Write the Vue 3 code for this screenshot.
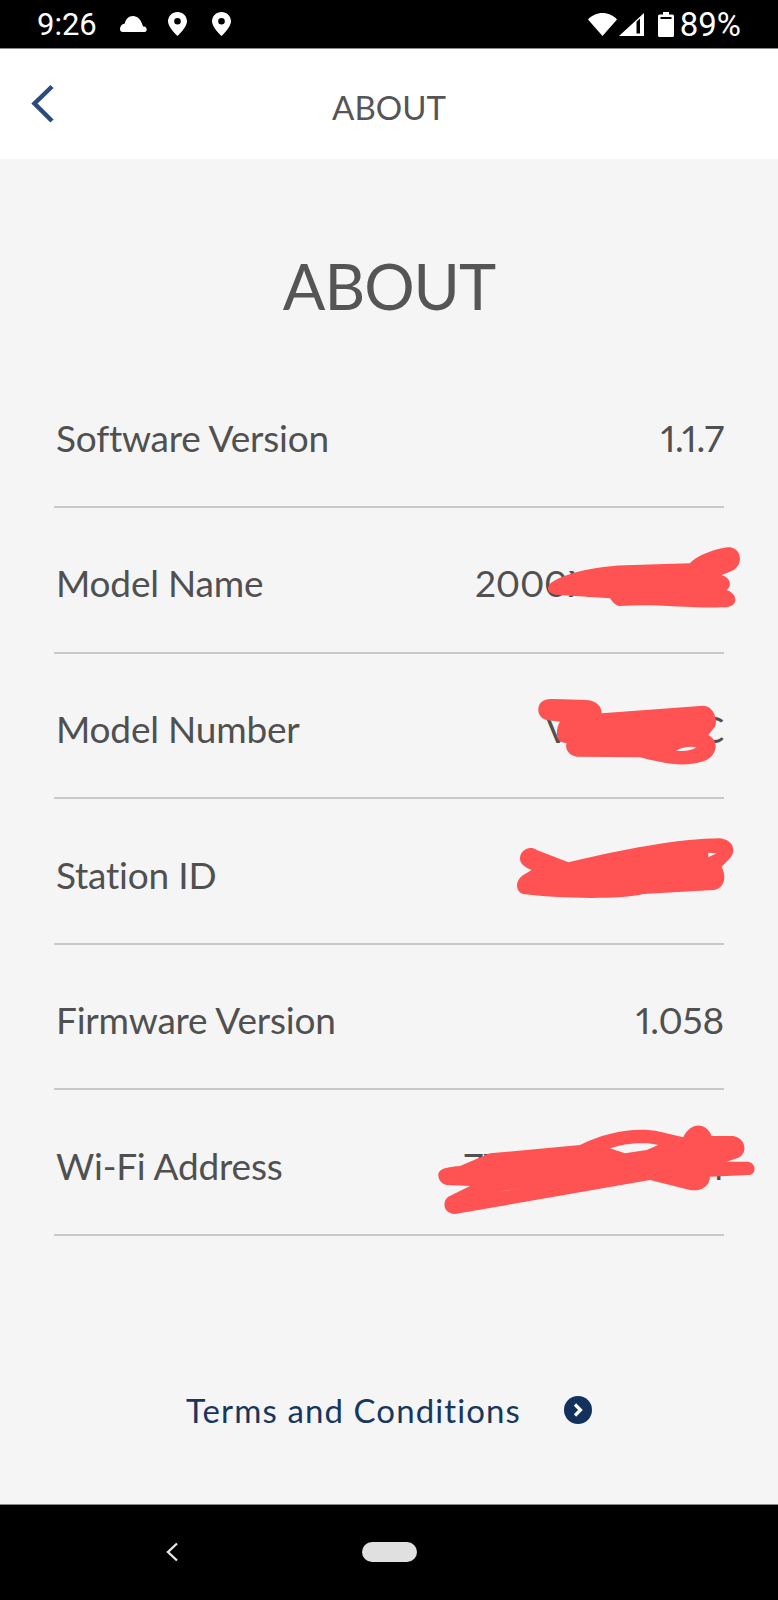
<template>
  <div class="screen">
    <!-- Android status bar -->
    <div class="status-bar">
      <div class="status-left">
        <span class="clock">9:26</span>
        <svg class="icon-cloud" viewBox="0 0 27 16"><path d="M3 16h21.500c3 0 3-5.500-.5-5.500-.5 0-1 .1-1 .1C21.500 4 17.500 0 13 0 8.500 0 5.500 3.500 4.800 7.500 1.500 8 0 10.500 0 13c0 2 1 3 3 3z" fill="#fff"/></svg>
        <svg v-for="n in 2" :key="n" class="icon-pin" viewBox="0 0 19 24"><path fill-rule="evenodd" d="M9.500 0C4.200 0 0 4.100 0 9.300 0 14 5.500 20.500 9.500 24c4-3.500 9.500-10 9.500-14.700C19 4.100 14.800 0 9.500 0zm0 12.500a3.300 3.300 0 1 1 0-6.600 3.300 3.300 0 0 1 0 6.600z" fill="#fff"/></svg>
      </div>
      <div class="status-right">
        <svg class="icon-wifi" viewBox="0 0 29 23"><path d="M14.500 23 0 6.500C3.500 2.500 9 0 14.500 0S25.500 2.500 29 6.500z" fill="#fff"/></svg>
        <svg class="icon-signal" viewBox="0 0 25 23"><path fill-rule="evenodd" d="M0 23 25 0v23zM17.500 20.500h3.500V5.500l-3.500 3.200z" fill="#fff"/></svg>
        <svg class="icon-battery" viewBox="0 0 16 25"><path fill-rule="evenodd" d="M5 0h6v2.500h3.500A1.500 1.500 0 0 1 16 4v19.500a1.500 1.500 0 0 1-1.500 1.500h-13A1.500 1.500 0 0 1 0 23.500V4a1.500 1.500 0 0 1 1.500-1.500H5zM2.500 5v2h11V5z" fill="#fff"/></svg>
        <span class="battery-pct">89%</span>
      </div>
    </div>

    <!-- Nav -->
    <header class="nav">
      <svg class="nav-back" viewBox="0 0 24 40"><path d="M21 2.500 3.500 19.500 21 37" fill="none" stroke="#2b4a7f" stroke-width="4.500"/></svg>
      <span class="nav-title">ABOUT</span>
    </header>

    <main class="content">
      <h1 class="page-title">ABOUT</h1>
      <div class="rows">
        <div v-for="row in rows" :key="row.label" class="row">
          <span class="row-label">{{ row.label }}</span>
          <span class="row-value">{{ row.value }}</span>
        </div>
      </div>
      <a class="terms">
        <span class="terms-text">Terms and Conditions</span>
        <svg class="terms-icon" viewBox="0 0 28 28"><circle cx="14" cy="14" r="14" fill="#12315c"/><path d="M11 8.500 16.500 14 11 19.500" fill="none" stroke="#fff" stroke-width="3.200"/></svg>
      </a>
    </main>

    <!-- Android nav bar -->
    <footer class="sys-nav">
      <svg class="sys-back" viewBox="0 0 14 20"><path d="M12 1.500 3 10l9 8.500" fill="none" stroke="#e6e6e6" stroke-width="2.400"/></svg>
      <span class="sys-home"></span>
    </footer>

    <!-- red marker scribbles drawn over the screenshot -->
    <svg class="scribbles" viewBox="0 0 778 1600">
      <g transform="translate(420 530) scale(0.3333)">
        <path class="ink" d="M385 170C395 140 520 105 640 105L810 100C830 75 900 52 930 52C965 55 975 110 930 125L905 135C935 145 935 170 920 180C950 190 960 225 920 232C800 235 700 220 600 228C585 228 575 210 570 205L420 195C390 195 380 180 385 170Z"/>
        <path class="ink" d="M355 540C355 510 380 507 400 507L500 510C530 512 545 530 545 550L850 527C880 527 895 570 885 590L865 615C895 630 895 670 860 690C800 715 730 700 660 682L470 680C440 675 435 650 440 640L420 635C405 620 410 590 420 575L380 570C360 565 355 550 355 540Z"/>
        <path class="gap" d="M768 662C785 652 810 648 830 652C815 662 790 665 768 662Z"/>
      </g>
      <g transform="translate(420 820) scale(0.3333)">
        <path class="ink" d="M300 115C300 90 330 75 350 90L445 127C600 90 780 55 900 55C945 60 950 100 925 120L905 140C920 170 915 205 880 210L670 222C600 240 400 235 310 222C285 215 285 180 310 165L335 150C310 140 300 130 300 115Z"/>
        <path class="gap" d="M865 98L890 100L865 112Z"/>
      </g>
      <g transform="translate(420 1110) scale(0.3333)">
        <path class="ink" d="M55 195C55 180 70 172 120 168L210 130L480 105C560 65 650 50 720 65L790 82C810 35 860 35 875 78L940 78C980 85 985 135 950 145L920 155L985 155C1010 160 1010 195 985 195L870 200C870 230 840 245 810 240L690 210L105 312C70 310 65 275 85 260L150 228L80 225C60 220 55 205 55 195Z"/>
        <path class="gap" d="M570 115C610 100 680 95 715 105L680 120L615 130Z"/>
        <path class="gap" d="M235 245L320 232L270 240Z"/>
      </g>
    </svg>
  </div>
</template>

<script setup>
// values were covered with marker in the original, only the visible ends are real
const rows = [
  { label: 'Software Version', value: '1.1.7' },
  { label: 'Model Name', value: '2000XXXXXXr' },
  { label: 'Model Number', value: 'VXXXXXIC' },
  { label: 'Station ID', value: '' },
  { label: 'Firmware Version', value: '1.058' },
  { label: 'Wi-Fi Address', value: '7X:XX:XX:XX:X1' }
]
</script>

<style>
html, body { margin: 0; background: #000; }
</style>

<style scoped>
.screen {
  position: relative;
  width: 778px;
  height: 1600px;
  display: flex;
  flex-direction: column;
  overflow: hidden;
  font-family: Lato, sans-serif;
}

.status-bar {
  height: 48px;
  flex-shrink: 0;
  background: #000;
  border-bottom: 1px solid #8a8a8a;
  display: flex;
  justify-content: space-between;
  align-items: center;
  padding: 0 37px;
  color: #fff;
  font-family: Roboto, sans-serif;
  font-size: 31px;
}

.status-left, .status-right {
  display: flex;
  align-items: center;
}

.clock { width: 83px; }
.battery-pct { font-size: 33px; }
.icon-cloud { width: 27px; height: 16px; margin-right: 21px; margin-top: -1px; }
.icon-pin { width: 19px; height: 24px; margin-right: 25px; }
.icon-wifi { width: 29px; height: 23px; margin-right: 2px; }
.icon-signal { width: 25px; height: 23px; margin-right: 14px; }
.icon-battery { width: 16px; height: 25px; margin-right: 6px; }

.nav {
  height: 110px;
  flex-shrink: 0;
  background: #fff;
  display: flex;
  align-items: center;
  justify-content: center;
  position: relative;
}

.nav-back {
  position: absolute;
  left: 31px;
  top: 35px;
  width: 24px;
  height: 40px;
}

.nav-title {
  font-size: 33px;
  color: #555;
  margin-top: 5px;
}

.content {
  flex: 1;
  background: #f5f5f5;
  padding: 0 54px;
  display: flex;
  flex-direction: column;
}

.page-title {
  height: 203.5px;
  box-sizing: border-box;
  padding-top: 50px;
  margin: 0;
  display: flex;
  align-items: center;
  justify-content: center;
  font-size: 63px;
  font-weight: 400;
  letter-spacing: -1px;
  color: #555;
}

.row {
  height: 145.6px;
  box-sizing: border-box;
  border-bottom: 2px solid #c9c9c9;
  display: flex;
  justify-content: space-between;
  align-items: center;
  padding-top: 6px;
  font-size: 37px;
  letter-spacing: -0.2px;
  color: #505050;
}

.row-label { padding-left: 2px; }
.row-value { font-variant-numeric: proportional-nums; }

.terms {
  display: flex;
  align-items: center;
  justify-content: center;
  gap: 43px;
  margin-top: 153.500px;
  color: #17375e;
  font-size: 33px;
  letter-spacing: 1.100px;
}

.terms-icon { width: 28px; height: 28px; }

.sys-nav {
  height: 95px;
  flex-shrink: 0;
  background: #000;
  border-top: 1px solid #8a8a8a;
  position: relative;
}

.sys-back {
  position: absolute;
  left: 165px;
  top: 37px;
  width: 14px;
  height: 20px;
}

.sys-home {
  position: absolute;
  left: 362px;
  top: 37px;
  width: 55px;
  height: 20px;
  border-radius: 10px;
  background: #e0e0e0;
}

.scribbles {
  position: absolute;
  left: 0;
  top: 0;
  width: 778px;
  height: 1600px;
  pointer-events: none;
}

.ink { fill: #ff5252; }
.gap { fill: #f5f5f5; }
</style>
